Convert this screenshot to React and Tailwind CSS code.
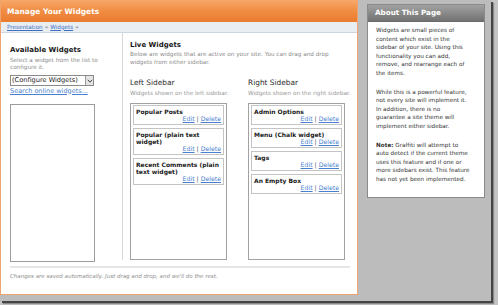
import React from "react";

function Item({ lines }) {
  return (
    <div className="border border-[#c4c4c4] bg-white px-[2px] pt-[2px] pb-[2px]">
      <div className="text-[6px] leading-[7px] font-bold text-[#1a1a1a] whitespace-nowrap">
        {lines.map((l, i) => (
          <div key={i}>{l}</div>
        ))}
      </div>
      <div className="flex justify-end text-[6.2px] leading-[7px] whitespace-nowrap">
        <span className="text-[#4a7fcf] underline">Edit</span>
        <span className="text-[#555] mx-[2px]">|</span>
        <span className="text-[#4a7fcf] underline">Delete</span>
      </div>
    </div>
  );
}

function Sidebar({ title, desc, items }) {
  return (
    <div className="w-[97px] shrink-0">
      <div className="text-[7.4px] leading-[10px] text-[#2a2a2a] whitespace-nowrap">{title}</div>
      <div className="mt-[1.5px] text-[5.7px] leading-[7px] text-[#9a9a9a] whitespace-nowrap">{desc}</div>
      <div className="mt-[6.5px] h-[157px] border border-[#a2a2a2] bg-white px-[2px] pt-[1px] flex flex-col gap-[3px]">
        {items.map((it, i) => (
          <Item key={i} lines={it} />
        ))}
      </div>
    </div>
  );
}

export default function App() {
  return (
    <div className="w-[498px] h-[305px] bg-[#c4c4c4] overflow-hidden font-['DejaVu_Sans',sans-serif]">
      <div className="w-[491px] h-[301px] bg-[#bcbcbc] shadow-[2px_2px_0_#454545,3px_3px_1px_#8a8a8a] flex items-start">
        {/* Main panel */}
        <div className="w-[358px] h-[295px] shrink-0 bg-white border-x border-b border-[#f0a470] flex flex-col">
          <div className="h-[22px] bg-gradient-to-b from-[#f7a868] via-[#f08c42] to-[#ea7d30] flex items-center pl-[6px] pt-[2px]">
            <span className="text-white font-bold text-[7.5px] leading-[10px] whitespace-nowrap">Manage Your Widgets</span>
          </div>
          <div className="h-[11px] bg-[#e9eef3] border-b border-[#cdd5de] flex items-center pl-[6px] text-[5.7px] leading-[7px] whitespace-nowrap">
            <span className="text-[#3e6fc4] underline">Presentation</span>
            <span className="text-[#777] mx-[2px]">»</span>
            <span className="text-[#3e6fc4] underline">Widgets</span>
            <span className="text-[#777] mx-[2px]">»</span>
          </div>
          <div className="flex h-[231px]">
            {/* Left column */}
            <div className="w-[121px] shrink-0 pl-[9px] pt-[12px]">
              <div className="text-[7px] leading-[10px] font-bold text-[#1a1a1a] whitespace-nowrap">Available Widgets</div>
              <div className="mt-[1.5px] text-[5.7px] leading-[7px] text-[#8c8c8c] whitespace-nowrap">
                Select a widget from the list to
                <br />
                configure it.
              </div>
              <div className="mt-[4.5px] w-[84px] h-[11px] border border-[#8a8a8a] bg-white flex items-center">
                <span className="flex-1 pl-[1px] text-[6.6px] leading-[9px] text-[#1a1a1a] whitespace-nowrap overflow-hidden">(Configure Widgets)</span>
                <span className="w-[8px] h-[9px] border-l border-[#9a9a9a] bg-[#e4e4e4] flex items-center justify-center">
                  <svg width="6" height="4" viewBox="0 0 6 4">
                    <path d="M0.8 0.8 L3 3.2 L5.2 0.8" fill="none" stroke="#444" strokeWidth="1" />
                  </svg>
                </span>
              </div>
              <div className="mt-[1.5px] text-[6.5px] leading-[7px] text-[#4a7fcf] underline whitespace-nowrap">Search online widgets...</div>
              <div className="mt-[9.5px] w-[85px] h-[158px] border border-[#9c9c9c] bg-white"></div>
            </div>
            {/* Divider */}
            <div className="w-px h-[227px] bg-[#d8d8d8] shrink-0"></div>
            {/* Middle column */}
            <div className="pl-[7px] pt-[7px]">
              <div className="text-[7px] leading-[10px] font-bold text-[#1a1a1a] whitespace-nowrap">Live Widgets</div>
              <div className="text-[5.7px] leading-[8px] text-[#8c8c8c] whitespace-nowrap">
                Below are widgets that are active on your site. You can drag and drop
                <br />
                widgets from either sidebar.
              </div>
              <div className="mt-[12px] flex gap-[21px]">
                <Sidebar
                  title="Left Sidebar"
                  desc="Widgets shown on the left sidebar."
                  items={[["Popular Posts"], ["Popular (plain text", "widget)"], ["Recent Comments (plain", "text widget)"]]}
                />
                <Sidebar
                  title="Right Sidebar"
                  desc="Widgets shown on the right sidebar."
                  items={[["Admin Options"], ["Menu (Chalk widget)"], ["Tags"], ["An Empty Box"]]}
                />
              </div>
            </div>
          </div>
          <div className="ml-[9px] mr-[7px] mt-[2px] border-t-2 border-[#e6e6e6] pt-[4px] text-[5.5px] leading-[8px] italic text-[#8c8c8c] whitespace-nowrap">
            Changes are saved automatically. Just drag and drop, and we'll do the rest.
          </div>
        </div>
        {/* About panel */}
        <div className="ml-[9px] mt-[4px] w-[118px] h-[194px] shrink-0 border border-[#8a8a8a] bg-white flex flex-col">
          <div className="h-[17px] bg-gradient-to-b from-[#a2a2a2] to-[#727272] border-b border-[#6a6a6a] flex items-center pl-[7px]">
            <span className="text-white font-bold text-[7.2px] leading-[10px] whitespace-nowrap">About This Page</span>
          </div>
          <div className="px-[8px] pt-[4px] text-[5.7px] leading-[8.6px] text-[#333] whitespace-nowrap">
            <p>
              Widgets are small pieces of
              <br />
              content which exist in the
              <br />
              sidebar of your site. Using this
              <br />
              functionality you can add,
              <br />
              remove, and rearrange each of
              <br />
              the items.
            </p>
            <p className="mt-[10px]">
              While this is a powerful feature,
              <br />
              not every site will implement it.
              <br />
              In addition, there is no
              <br />
              guarantee a site theme will
              <br />
              implement either sidebar.
            </p>
            <p className="mt-[10px]">
              <span className="font-bold">Note:</span> Graffiti will attempt to
              <br />
              auto detect if the current theme
              <br />
              uses this feature and if one or
              <br />
              more sidebars exist. This feature
              <br />
              has not yet been implemented.
            </p>
          </div>
        </div>
      </div>
    </div>
  );
}
